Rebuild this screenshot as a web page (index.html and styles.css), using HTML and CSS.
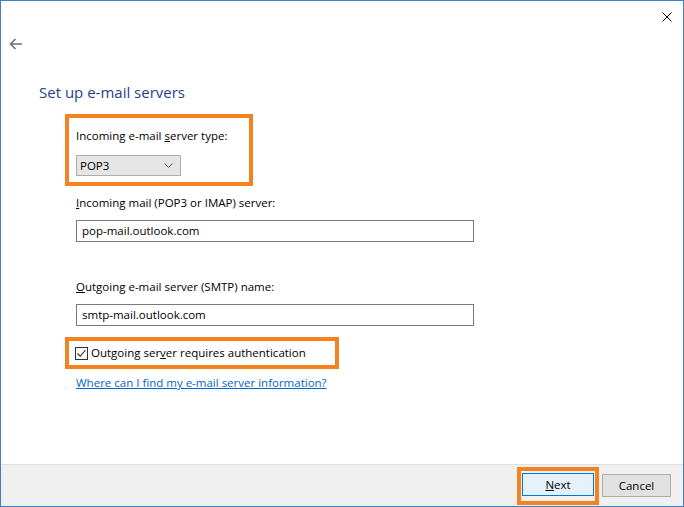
FILE: index.html
```html
<!DOCTYPE html>
<html>
<head>
<meta charset="utf-8">
<link rel="stylesheet" href="styles.css">
</head>
<body>
<div class="window">
  <div class="titlebar">
    <span class="close"><svg width="10" height="10" viewBox="0 0 10 10"><path d="M0.5 0.5 L9.5 9.5 M9.5 0.5 L0.5 9.5" stroke="#000" stroke-width="1" fill="none"/></svg></span>
  </div>
  <div class="main">
    <div class="back"><svg width="14" height="12" viewBox="0 0 14 12"><path d="M1.5 6 H13 M6.5 1 L1.5 6 L6.5 11" stroke="#707070" stroke-width="1.6" fill="none"/></svg></div>
    <h1 class="title">Set up e-mail servers</h1>
    <div class="form">
      <div class="hl group1">
        <div class="label">Incoming e-mail <u>s</u>erver type:</div>
        <div class="select"><span>POP3</span><svg width="9" height="5" viewBox="0 0 9 5"><path d="M0.5 0.5 L4.5 4.5 L8.5 0.5" stroke="#555" stroke-width="1" fill="none"/></svg></div>
      </div>
      <div class="field f1">
        <div class="label"><u>I</u>ncoming mail (POP3 or IMAP) server:</div>
        <div class="input">pop-mail.outlook.com</div>
      </div>
      <div class="field f2">
        <div class="label"><u>O</u>utgoing e-mail server (SMTP) name:</div>
        <div class="input">smtp-mail.outlook.com</div>
      </div>
      <div class="hl group2">
        <span class="check"><svg width="11" height="11" viewBox="0 0 11 11"><path d="M1.5 5.5 L4.2 8.3 L9.5 2" stroke="#222" stroke-width="1.1" fill="none"/></svg></span>
        <span class="label">Outgoing ser<u>v</u>er requires authentication</span>
      </div>
      <a class="link" href="#">Where can I find my e-mail server information?</a>
    </div>
  </div>
  <div class="footer">
    <div class="hl nextwrap"><button class="btn next"><u>N</u>ext</button></div>
    <button class="btn cancel">Cancel</button>
  </div>
</div>
</body>
</html>
```

FILE: styles.css
```css
html, body {
  margin: 0;
  padding: 0;
  background: #ffffff;
}
.window {
  width: 684px;
  height: 507px;
  box-sizing: border-box;
  border: 1px solid #3f7fc0;
  display: flex;
  flex-direction: column;
  font-family: "Segoe UI", "Open Sans", "Noto Sans", sans-serif;
  font-size: 11.5px;
  color: #000;
  background: #fff;
}
.titlebar {
  height: 30px;
  display: flex;
  justify-content: flex-end;
  align-items: center;
}
.close {
  display: flex;
  margin-right: 11px;
  margin-top: 1px;
}
.main {
  flex: 1;
  display: flex;
  flex-direction: column;
}
.back {
  margin-left: 8px;
  margin-top: 7px;
  height: 12px;
  display: flex;
}
.title {
  margin: 31px 0 11px 38px;
  font-weight: normal;
  font-size: 15px;
  line-height: 22px;
  color: #1f3f8c;
}
.form {
  margin-left: 64px;
  display: flex;
  flex-direction: column;
  align-items: flex-start;
}
.hl {
  border: 4px solid #f58220;
}
.label {
  line-height: 16px;
  white-space: nowrap;
}
.group1 {
  width: 173px;
  padding: 10px 0 6px 7px;
}
.select {
  margin-top: 11px;
  width: 105px;
  height: 21px;
  box-sizing: border-box;
  border: 1px solid #adadad;
  background: #e5e5e5;
  display: flex;
  align-items: center;
  justify-content: space-between;
  padding: 0 7px 0 3px;
}
.field {
  margin-left: 11px;
  display: flex;
  flex-direction: column;
}
.f1 {
  margin-top: 9px;
}
.f2 {
  margin-top: 37px;
}
.input {
  margin-top: 9px;
  width: 398px;
  height: 22px;
  box-sizing: border-box;
  border: 1px solid #7a7a7a;
  padding: 0 5px;
  line-height: 20px;
}
.group2 {
  margin-top: 11px;
  width: 274px;
  box-sizing: border-box;
  display: flex;
  align-items: center;
  padding: 4px 0 4px 6px;
}
.check {
  width: 13px;
  height: 13px;
  box-sizing: border-box;
  border: 1px solid #333;
  display: flex;
  align-items: center;
  justify-content: center;
  margin-right: 3px;
}
.link {
  margin: 6px 0 0 11px;
  line-height: 16px;
  color: #0066cc;
  text-decoration: underline;
}
.footer {
  height: 42px;
  box-sizing: border-box;
  border-top: 1px solid #dfdfdf;
  background: #f0f0f0;
  display: flex;
  justify-content: flex-end;
  align-items: center;
  padding-right: 12px;
}
.btn {
  font-family: "Segoe UI", "Open Sans", "Noto Sans", sans-serif;
  font-size: 11.5px;
  height: 23px;
  box-sizing: border-box;
  padding: 0;
  color: #000;
}
.nextwrap {
  padding: 2px 1px 5px 1px;
  margin-right: 3px;
  display: flex;
}
.next {
  width: 72px;
  background: #e5f1fb;
  border: 1px solid #0078d7;
}
.cancel {
  width: 69px;
  background: #e1e1e1;
  border: 1px solid #adadad;
}
```
